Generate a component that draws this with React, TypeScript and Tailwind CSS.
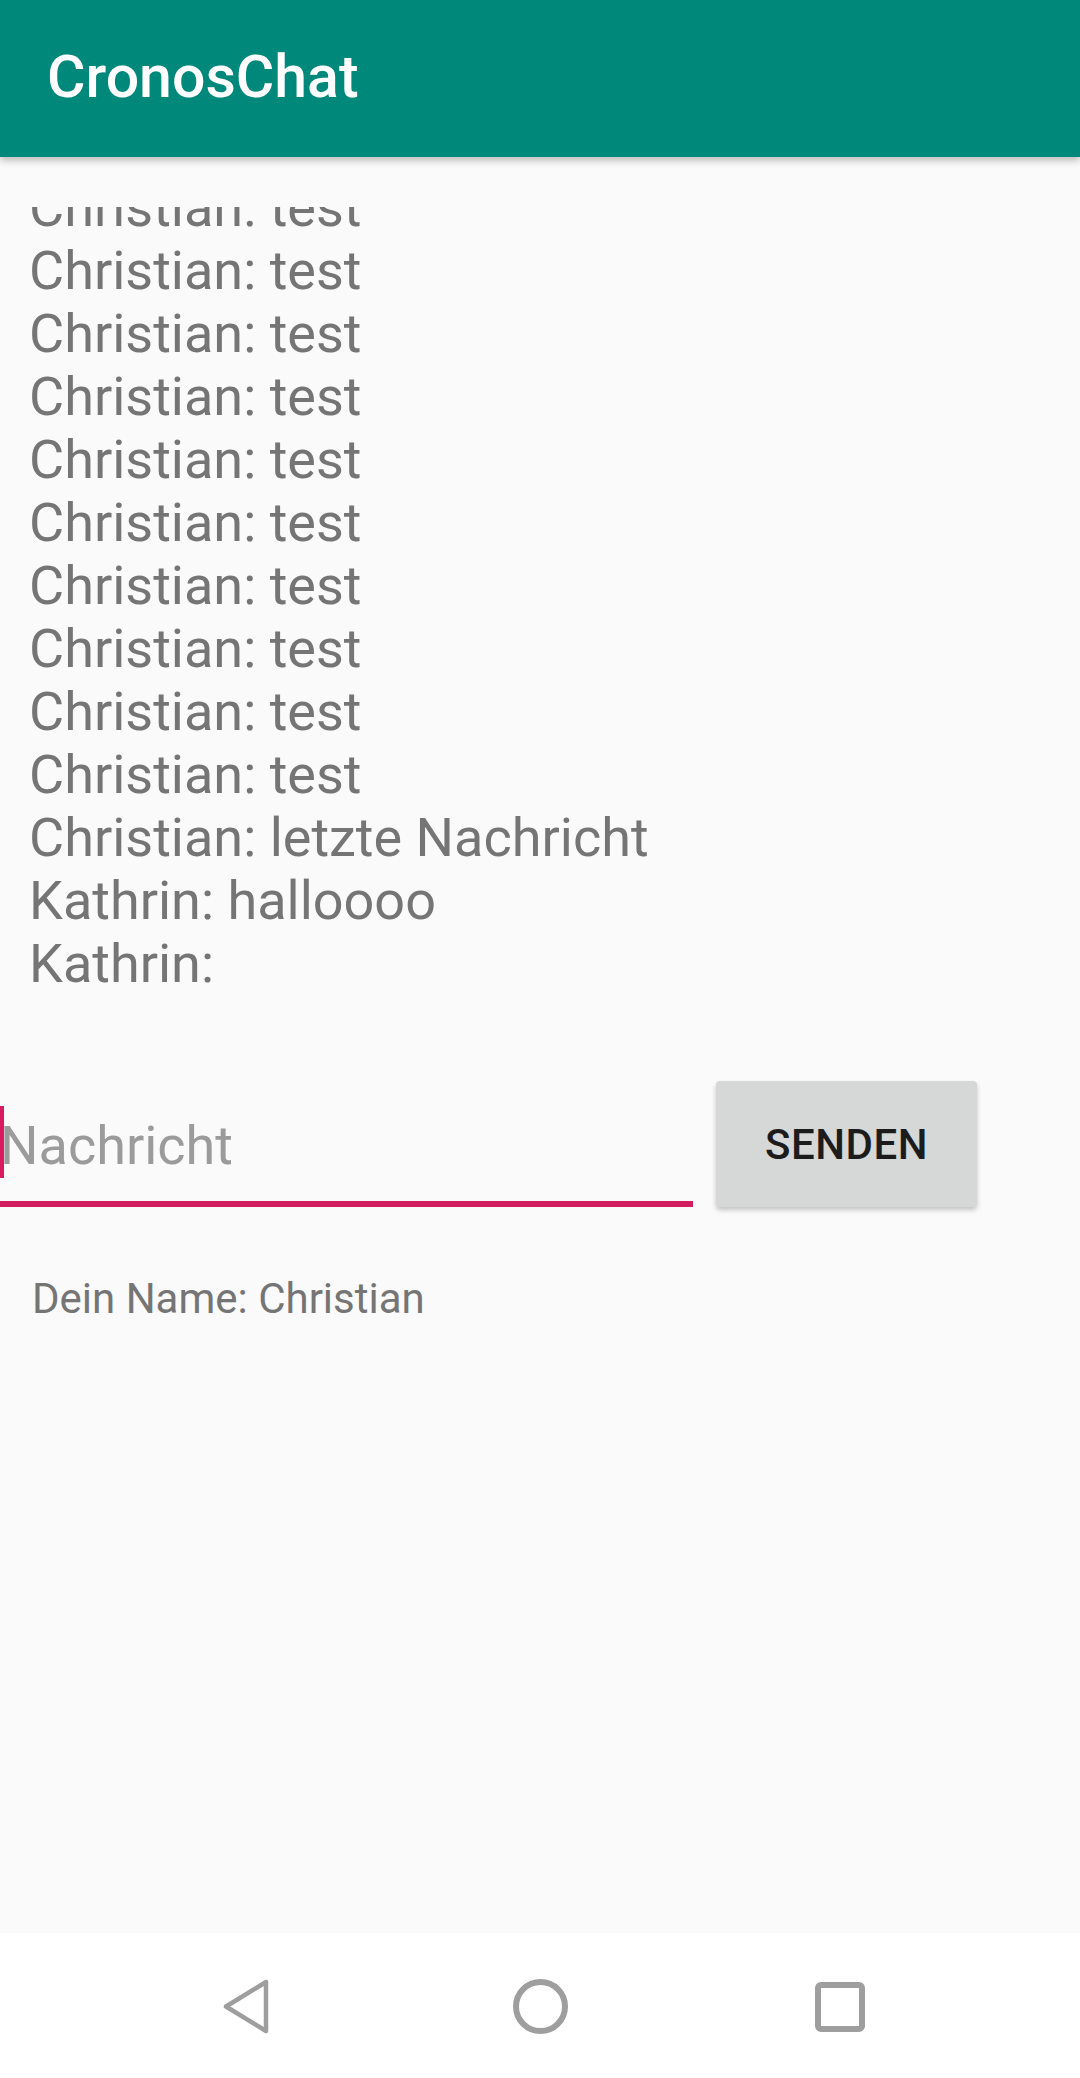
import React from "react";

const lines: string[] = [
  "Christian: test",
  "Christian: test",
  "Christian: test",
  "Christian: test",
  "Christian: test",
  "Christian: test",
  "Christian: test",
  "Christian: test",
  "Christian: test",
  "Christian: test",
  "Christian: test",
  "Christian: letzte Nachricht",
  "Kathrin: halloooo",
  "Kathrin:",
];

export default function App() {
  return (
    <div
      className="w-[1080px] h-[2078px] flex flex-col bg-[#fafafa] overflow-hidden"
      style={{ fontFamily: "Roboto, 'Noto Sans', sans-serif" }}
    >
      {/* App bar */}
      <header className="relative z-10 h-[157px] shrink-0 bg-[#00887a] pl-[47px] pt-[42px] shadow-[0_3px_8px_rgba(0,0,0,0.28)]">
        <h1 className="text-[59px] font-medium text-white leading-[69px]">CronosChat</h1>
      </header>

      {/* Main */}
      <main className="flex-1 flex flex-col">
        {/* Chat list (scrolled to bottom) */}
        <div className="mt-[50px] h-[788px] overflow-hidden flex flex-col justify-end pl-[29px]">
          {lines.map((l, i) => (
            <div key={i} className="text-[54px] leading-[63px] text-[#757575] whitespace-nowrap">
              {l}
            </div>
          ))}
        </div>

        {/* Input row */}
        <div className="mt-[86px] flex items-stretch gap-[23px] h-[126px]">
          <div className="relative w-[693px] border-b-[6px] border-[#d21d5e]">
            <span className="absolute left-0 top-[25px] w-[4px] h-[72px] bg-[#d81b60]" />
            <div className="pt-[33px] text-[54px] leading-[63px] text-[#9b9b9b]">Nachricht</div>
          </div>
          <button className="w-[261px] rounded-[4px] bg-[#d6d7d7] shadow-[0_3px_5px_rgba(0,0,0,0.22)] text-[42px] font-medium text-[#1c1c1c] tracking-[0.5px]">
            SENDEN
          </button>
        </div>

        {/* Name */}
        <div className="mt-[67px] pl-[32px] text-[42px] leading-[49px] text-[#757575]">Dein Name: Christian</div>
      </main>

      {/* Nav bar */}
      <nav className="h-[145px] shrink-0 bg-white flex items-center justify-center">
        <div className="w-[300px] flex justify-center">
          <svg width="60" height="60" viewBox="0 0 60 60">
            <path
              d="M56 6 L56 55 L16 30.5 Z"
              fill="none"
              stroke="#9e9e9e"
              strokeWidth="4.5"
              strokeLinejoin="round"
            />
          </svg>
        </div>
        <div className="w-[300px] flex justify-center">
          <svg width="60" height="60" viewBox="0 0 60 60">
            <circle cx="30.5" cy="30.5" r="24.5" fill="none" stroke="#9e9e9e" strokeWidth="6" />
          </svg>
        </div>
        <div className="w-[300px] flex justify-center">
          <svg width="60" height="60" viewBox="0 0 60 60">
            <rect x="8" y="9" width="44" height="44" rx="3" fill="none" stroke="#9e9e9e" strokeWidth="6" />
          </svg>
        </div>
      </nav>
    </div>
  );
}
